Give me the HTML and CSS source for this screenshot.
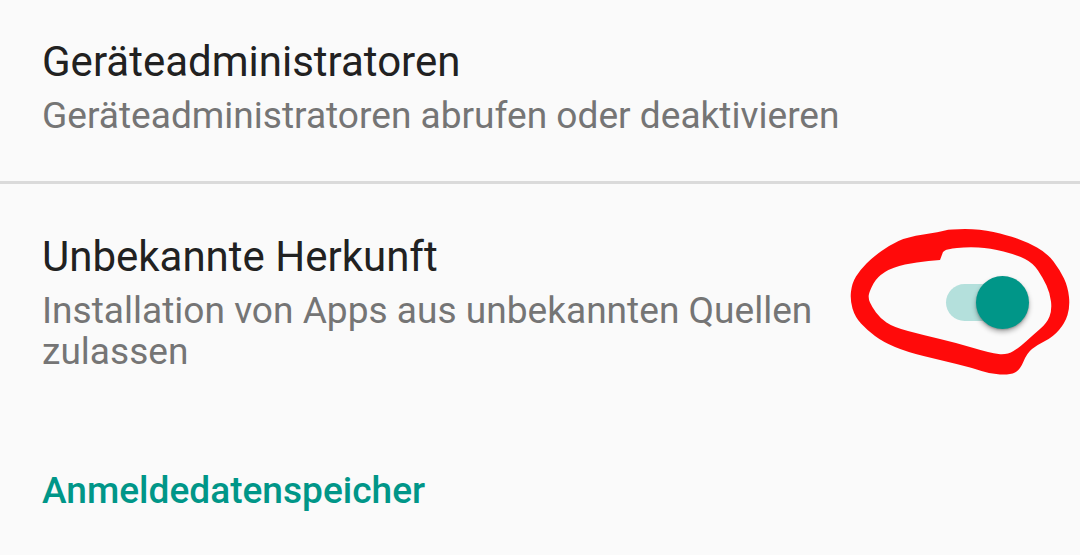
FILE: index.html
```html
<!DOCTYPE html>
<html lang="de">
<head>
<meta charset="utf-8">
<title>Sicherheit</title>
<link rel="stylesheet" href="styles.css">
</head>
<body>
<div class="screen">
  <div class="pref pref-first">
    <div class="pref-text">
      <div class="title">Geräteadministratoren</div>
      <div class="summary">Geräteadministratoren abrufen oder deaktivieren</div>
    </div>
  </div>
  <div class="divider"></div>
  <div class="pref pref-switch">
    <div class="pref-text">
      <div class="title">Unbekannte Herkunft</div>
      <div class="summary">Installation von Apps aus unbekannten Quellen zulassen</div>
    </div>
    <div class="widget">
      <div class="switch">
        <div class="track"></div>
        <div class="thumb"></div>
      </div>
    </div>
  </div>
  <div class="category">Anmeldedatenspeicher</div>

  <svg class="scribble" viewBox="0 0 240 165" width="240" height="165" aria-hidden="true">
    <path fill="#ff0a0a" fill-rule="evenodd" d="M41.5 31 Q50 25 58.5 21 Q67 17 83.5 14.5 Q100 12 105 10.5 Q110 9 125 9 Q140 9 153.5 12 Q167 15 177 18.5 Q187 22 197 27.5 Q207 33 213.5 41.5 Q220 50 224 58.5 Q228 67 229 77 Q230 87 227.5 95 Q225 103 219 110 Q213 117 205 121 Q197 125 192 129 Q187 133 183.5 141.5 Q180 150 175 152.5 Q170 155 160 154.5 Q150 154 141.5 151 Q133 148 116.5 144 Q100 140 83.5 136 Q67 132 55 127 Q43 122 35 116 Q27 110 21 103.5 Q15 97 12.5 88.5 Q10 80 11 71.5 Q12 63 16 56.5 Q20 50 26.5 43.5 Q33 37 41.5 31 Z M100 40 L88.5 41 Q77 42 65 44.5 Q53 47 45 52 Q37 57 33.5 63.5 Q30 70 29 74 Q28 78 30 82.5 Q32 87 36 92.5 Q40 98 46.5 102.5 Q53 107 68 111 Q83 115 100 119 Q117 123 133.5 128 Q150 133 158.5 134 Q167 135 173.5 131 Q180 127 186.5 121 Q193 115 200 109 Q207 103 209.5 96.5 Q212 90 211 81.5 Q210 73 206.5 65.5 Q203 58 198 50.5 Q193 43 185 39 Q177 35 163.5 31.5 Q150 28 138.5 27.5 Q127 27 117 28 Q107 29 105 30.5 L103 32 Z"/>
  </svg>
</div>
</body>
</html>
```

FILE: styles.css
```css
html, body {
  margin: 0;
  padding: 0;
  background: #fafafa;
}

.screen {
  position: relative;
  width: 1080px;
  height: 555px;
  overflow: hidden;
  font-family: Roboto, "Noto Sans", sans-serif;
}

.pref {
  display: flex;
  align-items: center;
  padding: 0 45px 0 42px;
}

.pref-first {
  padding-top: 37px;
  padding-bottom: 45px;
}

.pref-switch {
  padding-top: 48px;
  padding-bottom: 48px;
}

.pref-text {
  flex: 1;
  min-width: 0;
  padding-right: 56px;
}

.title {
  font-size: 42px;
  line-height: 50px;
  color: #212121;
}

.summary {
  margin-top: 8px;
  font-size: 37.1px;
  line-height: 41px;
  color: #757575;
}

.divider {
  height: 3px;
  background: #dadada;
}

.widget {
  display: flex;
  align-items: center;
}

.switch {
  position: relative;
  width: 89px;
  height: 53px;
  display: flex;
  align-items: center;
}

.track {
  width: 72px;
  height: 37px;
  border-radius: 18.5px;
  background: #b4e0dc;
}

.thumb {
  position: absolute;
  left: 30px;
  top: 0;
  width: 53px;
  height: 53px;
  border-radius: 50%;
  background: #009688;
  box-shadow: 0 3px 5px rgba(0, 0, 0, 0.3), 0 1px 2px rgba(0, 0, 0, 0.2);
}

.category {
  padding: 50px 42px 0;
  font-size: 37.1px;
  line-height: 42px;
  font-weight: 500;
  color: #009688;
}

.scribble {
  position: absolute;
  left: 840px;
  top: 220px;
}
```
